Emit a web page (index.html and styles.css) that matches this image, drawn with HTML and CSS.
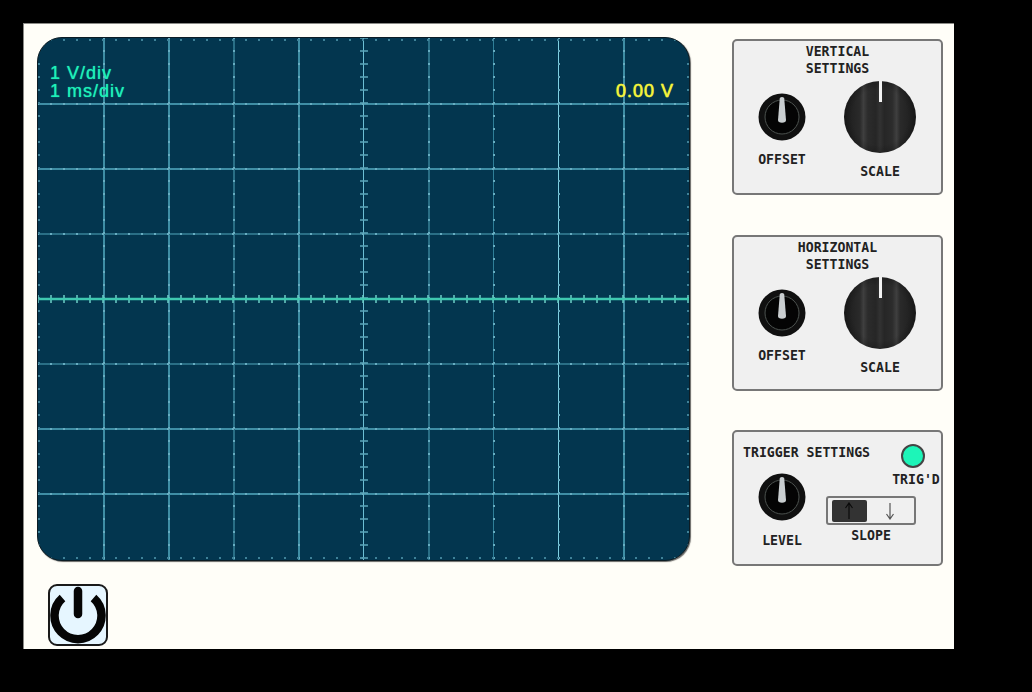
FILE: index.html
```html
<!DOCTYPE html>
<html lang="en">
<head>
    <meta charset="UTF-8">
    <meta name="viewport" content="width=device-width, initial-scale=1.0">
    <title>Oscilloscope</title>
    <link rel="stylesheet" href="styles.css">
</head>
<body>
    <svg class="defs" width="0" height="0" aria-hidden="true">
        <symbol id="small-knob" viewBox="0 0 48 48">
            <circle cx="24" cy="24" r="23.5" fill="#101010"/>
            <circle cx="24" cy="24" r="17" fill="#040404" stroke="#4c524f" stroke-width="1"/>
            <path d="M21.8 5 Q24 2.8 26.2 5 L28 27 Q28 29.8 24 29.8 Q20 29.8 20 27 Z" fill="#c9ced0"/>
        </symbol>
    </svg>

    <div class="scope">
        <div class="left-col">
            <div class="screen">
                <svg class="grid" width="651" height="522" viewBox="0 0 651 522">
                    <!-- main division lines -->
                    <path class="line-a" d="M66 0V522M131 0V522M261 0V522M586 0V522M0 66H651M0 131H651M0 391H651M0 456H651"/>
                    <path class="line-b" d="M196 0V522M391 0V522M0 196H651M0 326H651"/>
                    <path class="line-thin" d="M455.5 0V522"/>
                    <path class="line-c" d="M520.5 0V522"/>
                    <path class="axis" d="M325.5 0V522"/>
                    <!-- minor dots on every division line -->
                    <path class="dots" d="M0 66H651M0 131H651M0 196H651M0 326H651M0 391H651M0 456H651"/>
                    <path class="dots" d="M66 0V522M131 0V522M196 0V522M261 0V522M391 0V522M456 0V522M521 0V522M586 0V522"/>
                    <path class="dots edge" d="M0 2H651M0 520H651M1 0V522M650 0V522"/>
                    <path class="axis-ticks" d="M326 0V522"/>
                    <path class="trace-ticks" d="M0 261H651"/>
                    <path class="trace" d="M1 261H651"/>
                </svg>
                <div class="readout">1 V/div<br>1 ms/div</div>
                <div class="voltage">0.00 V</div>
            </div>
            <button class="power" type="button" aria-label="Power">
                <svg width="56" height="58" viewBox="0 0 56 58">
                    <path d="M12.5 12 A23.5 23.5 0 1 0 43.5 12" fill="none" stroke="#050505" stroke-width="8.5"/>
                    <path d="M28 5V28" fill="none" stroke="#050505" stroke-width="8.5" stroke-linecap="round"/>
                </svg>
            </button>
        </div>

        <div class="right-col">
            <section class="panel">
                <h2>VERTICAL<br>SETTINGS</h2>
                <div class="knobs">
                    <div class="knob-group small">
                        <svg width="48" height="48"><use href="#small-knob"/></svg>
                        <span>OFFSET</span>
                    </div>
                    <div class="knob-group large">
                        <div class="big-knob"></div>
                        <span>SCALE</span>
                    </div>
                </div>
            </section>

            <section class="panel">
                <h2>HORIZONTAL<br>SETTINGS</h2>
                <div class="knobs">
                    <div class="knob-group small">
                        <svg width="48" height="48"><use href="#small-knob"/></svg>
                        <span>OFFSET</span>
                    </div>
                    <div class="knob-group large">
                        <div class="big-knob"></div>
                        <span>SCALE</span>
                    </div>
                </div>
            </section>

            <section class="panel trigger">
                <div class="trigger-top">
                    <h2>TRIGGER SETTINGS</h2>
                    <div class="led-group">
                        <div class="led"></div>
                        <span>TRIG'D</span>
                    </div>
                </div>
                <div class="knobs">
                    <div class="knob-group level">
                        <svg width="48" height="48"><use href="#small-knob"/></svg>
                        <span>LEVEL</span>
                    </div>
                    <div class="slope-group">
                        <div class="slope">
                            <div class="slope-btn active">
                                <svg width="12" height="18" viewBox="0 0 12 18"><path d="M6 1V17M2.5 6L6 1L9.5 6"/></svg>
                            </div>
                            <div class="slope-btn">
                                <svg width="12" height="18" viewBox="0 0 12 18"><path d="M6 1V17M2.5 12L6 17L9.5 12"/></svg>
                            </div>
                        </div>
                        <span>SLOPE</span>
                    </div>
                </div>
            </section>
        </div>
    </div>
</body>
</html>
```

FILE: styles.css
```css
html,
body {
    height: 100%;
}
body {
    margin: 0;
    padding: 23px 0 0 23px;
    box-sizing: border-box;
    background-color: #000;
    font-family: "DejaVu Sans Mono", monospace;
}
.defs {
    position: absolute;
}
.scope {
    width: 931px;
    height: 626px;
    box-sizing: border-box;
    padding: 13px 11px 0 13px;
    display: flex;
    justify-content: space-between;
    background-color: #fffef8;
    border-top: 1px solid #8a8a86;
    border-left: 1px solid #8a8a86;
}
.left-col {
    display: flex;
    flex-direction: column;
}

/* scope screen */
.screen {
    position: relative;
    width: 653px;
    height: 524px;
    box-sizing: border-box;
    background-color: #03364f;
    border: 1px solid #0c1c24;
    border-radius: 25px;
    box-shadow: 1px 1px 1px rgba(0, 0, 0, 0.6);
    overflow: hidden;
}
.grid {
    display: block;
    fill: none;
}
.line-a {
    stroke: #3f8ea5;
    stroke-width: 2;
}
.line-b {
    stroke: #2a6f86;
    stroke-width: 2;
}
.line-thin {
    stroke: #2f7f98;
    stroke-width: 1;
}
.line-c {
    stroke: #7fd0e2;
    stroke-width: 1;
}
.dots {
    stroke: #68aec2;
    stroke-width: 2;
    stroke-dasharray: 2 11;
    stroke-dashoffset: 1;
}
.dots.edge {
    stroke: #3f8298;
}
.axis {
    stroke: #6cbfd4;
    stroke-width: 1;
}
.axis-ticks {
    stroke: #5ea8bc;
    stroke-width: 8;
    stroke-dasharray: 1.5 11.5;
    stroke-dashoffset: 0.75;
}
.trace-ticks {
    stroke: #6fcfc8;
    stroke-width: 8;
    stroke-dasharray: 1.5 11.5;
    stroke-dashoffset: 0.75;
}
.trace {
    stroke: #3fc8b0;
    stroke-width: 2.5;
}
.readout,
.voltage {
    position: absolute;
    font: 18px/18px "Liberation Sans", sans-serif;
    letter-spacing: 1px;
    text-shadow: 0 0 1px currentColor;
}
.readout {
    left: 12px;
    top: 26px;
    color: #1df0b8;
}
.voltage {
    right: 15px;
    top: 44px;
    color: #f5f53a;
    -webkit-text-stroke: 0.3px #f5f53a;
}

/* power button */
.power {
    width: 60px;
    height: 62px;
    margin: 23px 0 0 11px;
    padding: 0;
    display: flex;
    align-items: center;
    justify-content: center;
    background-color: #e6f6ff;
    border: 2px solid #1a1a1a;
    border-radius: 9px;
}

/* control panels */
.right-col {
    width: 211px;
    padding-top: 2px;
    display: flex;
    flex-direction: column;
    gap: 39.5px;
}
.panel {
    height: 156px;
    box-sizing: border-box;
    background-color: #f0f0f0;
    border: 2px solid #777;
    border-radius: 5px;
    color: #222;
    font-size: 13.2px;
    font-weight: bold;
    line-height: 17px;
    text-align: center;
}
.panel h2 {
    margin: 2px 0 0;
    font-size: inherit;
    font-weight: inherit;
}
.knobs {
    margin: 4px 0 0 -1px;
    display: flex;
}
.knob-group {
    width: 98px;
    display: flex;
    flex-direction: column;
    align-items: center;
    gap: 10px;
}
.knob-group.small {
    padding-top: 12px;
}
.knob-group.large {
    width: 96px;
    margin-left: 1px;
}
.big-knob {
    position: relative;
    width: 72px;
    height: 72px;
    border-radius: 50%;
    background:
        radial-gradient(circle, rgba(0, 0, 0, 0) 55%, rgba(0, 0, 0, 0.55) 100%),
        linear-gradient(90deg, #1c1c1c 0, #2a2a2a 22%, #3f3f3f 27%, #2c2c2c 33%, #262626 44%, #323232 50%, #262626 56%, #2c2c2c 67%, #3f3f3f 73%, #2a2a2a 78%, #1c1c1c 100%);
}
.big-knob::after {
    content: "";
    position: absolute;
    left: 35px;
    top: 0;
    width: 3px;
    height: 21px;
    background-color: #f2f2f2;
}

/* trigger panel */
.panel.trigger {
    height: 135.5px;
}
.trigger .knobs {
    margin-top: 0;
}
.trigger-top {
    height: 41px;
    display: flex;
    justify-content: space-between;
}
.trigger-top h2 {
    margin: 12px 0 0 9px;
}
.led-group {
    width: 48px;
    height: 60px;
    margin-right: 1px;
    padding-top: 12px;
    display: flex;
    flex-direction: column;
    align-items: center;
    gap: 3px;
    flex: none;
}
.led {
    width: 20px;
    height: 20px;
    margin-right: 6px;
    background-color: #1df5b8;
    border: 2px solid #444;
    border-radius: 50%;
}
.knob-group.level {
    gap: 11px;
}
.slope-group {
    width: 90px;
    margin-left: -5px;
    padding-top: 23px;
    display: flex;
    flex-direction: column;
    gap: 2px;
}
.slope {
    height: 29px;
    box-sizing: border-box;
    padding: 2px 4px;
    display: flex;
    border: 2px solid #777;
    border-radius: 3px;
}
.slope-btn {
    width: 35px;
    height: 22px;
    display: flex;
    align-items: center;
    justify-content: center;
    fill: none;
    stroke: #555;
    stroke-width: 1.2;
}
.slope-btn + .slope-btn {
    margin-left: 4px;
    width: 40px;
}
.slope-btn.active {
    background-color: #333;
    border-radius: 2px;
    stroke: #0a0a0a;
}
```
